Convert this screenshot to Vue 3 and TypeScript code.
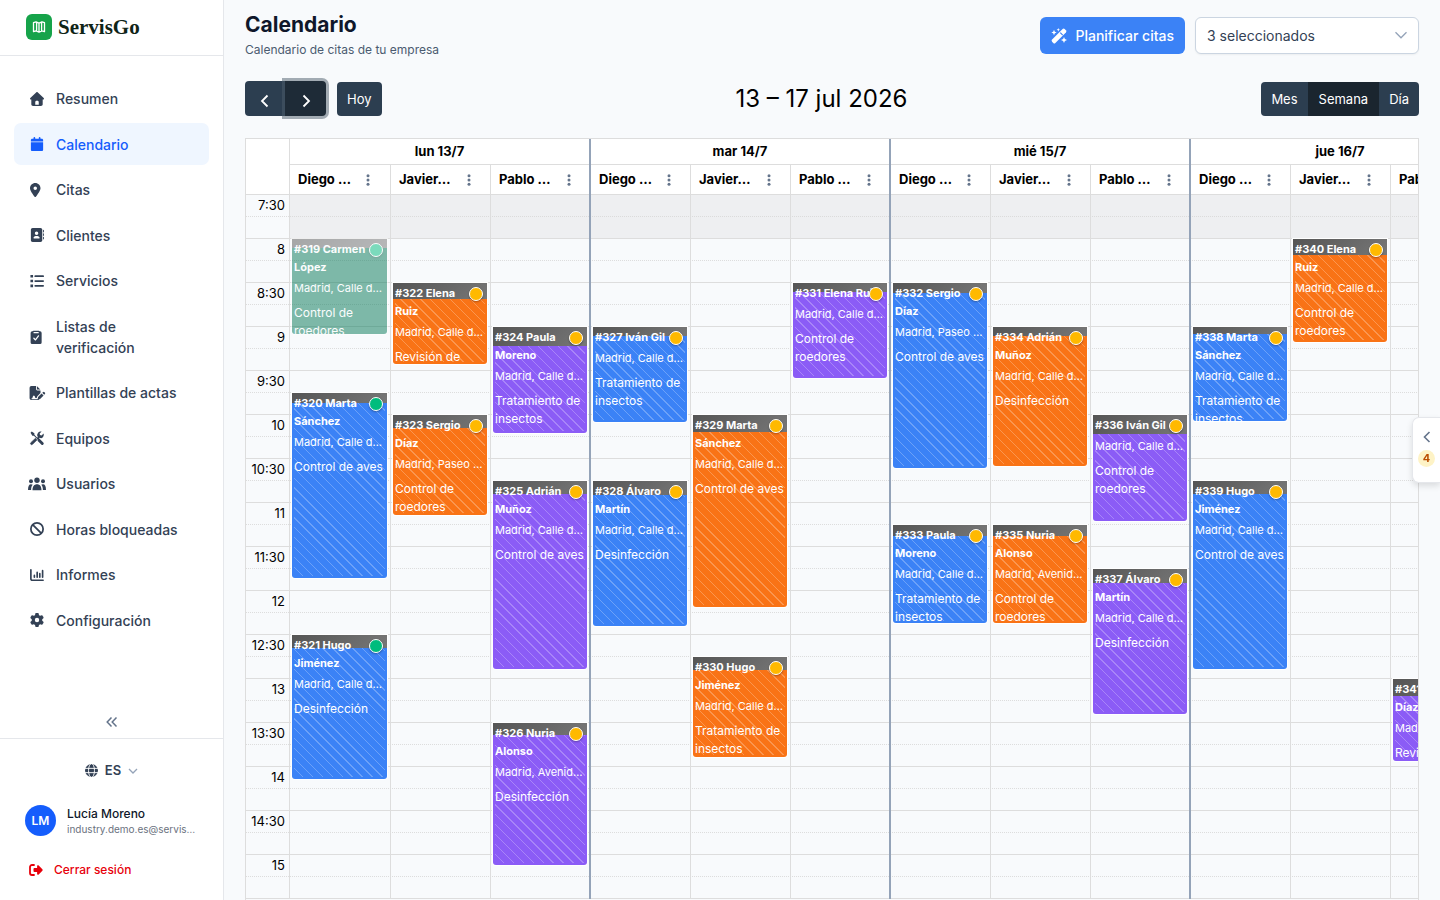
<script setup lang="ts">
import { ref } from 'vue'

interface NavItem { label: string; icon: string; active?: boolean }
interface Appointment {
  id: number
  client: string
  address: string
  service: string
  color: 'blue' | 'orange' | 'violet' | 'green'
  start: number
  height: number
  lead: number
  done?: boolean
  past?: boolean
}
interface Column { resource: string; events: Appointment[] }
interface Day { label: string; columns: Column[] }

const nav: NavItem[] = [
  { label: 'Resumen', icon: 'home' },
  { label: 'Calendario', icon: 'calendar', active: true },
  { label: 'Citas', icon: 'pin' },
  { label: 'Clientes', icon: 'book' },
  { label: 'Servicios', icon: 'list' },
  { label: 'Listas de verificación', icon: 'clipboard' },
  { label: 'Plantillas de actas', icon: 'file' },
  { label: 'Equipos', icon: 'tools' },
  { label: 'Usuarios', icon: 'users' },
  { label: 'Horas bloqueadas', icon: 'ban' },
  { label: 'Informes', icon: 'chart' },
  { label: 'Configuración', icon: 'gear' },
]

const calle = 'Madrid, Calle d…'
const paseo = 'Madrid, Paseo …'
const avenida = 'Madrid, Avenid…'

// start: minutes since 7:30
const days: Day[] = [
  {
    label: 'lun 13/7',
    columns: [
      { resource: 'Diego …', events: [
        { id: 319, client: 'Carmen López', address: calle, service: 'Control de roedores', color: 'green', start: 30, height: 95, lead: 9, done: true, past: true },
        { id: 320, client: 'Marta Sánchez', address: calle, service: 'Control de aves', color: 'blue', start: 135, height: 185, lead: 10, done: true },
        { id: 321, client: 'Hugo Jiménez', address: calle, service: 'Desinfección', color: 'blue', start: 300, height: 144, lead: 13, done: true },
      ] },
      { resource: 'Javier…', events: [
        { id: 322, client: 'Elena\nRuiz', address: calle, service: 'Revisión de', color: 'orange', start: 60, height: 81, lead: 16 },
        { id: 323, client: 'Sergio Díaz', address: paseo, service: 'Control de roedores', color: 'orange', start: 150, height: 100, lead: 13 },
      ] },
      { resource: 'Pablo …', events: [
        { id: 324, client: 'Paula Moreno', address: calle, service: 'Tratamiento de insectos', color: 'violet', start: 90, height: 106, lead: 19 },
        { id: 325, client: 'Adrián Muñoz', address: calle, service: 'Control de aves', color: 'violet', start: 195, height: 188, lead: 13 },
        { id: 326, client: 'Nuria Alonso', address: avenida, service: 'Desinfección', color: 'violet', start: 360, height: 142, lead: 12 },
      ] },
    ],
  },
  {
    label: 'mar 14/7',
    columns: [
      { resource: 'Diego …', events: [
        { id: 327, client: 'Iván Gil', address: calle, service: 'Tratamiento de insectos', color: 'blue', start: 90, height: 95, lead: 9 },
        { id: 328, client: 'Álvaro Martín', address: calle, service: 'Desinfección', color: 'blue', start: 195, height: 145, lead: 14 },
      ] },
      { resource: 'Javier…', events: [
        { id: 329, client: 'Marta Sánchez', address: calle, service: 'Control de aves', color: 'orange', start: 150, height: 192, lead: 17 },
        { id: 330, client: 'Hugo Jiménez', address: calle, service: 'Tratamiento de insectos', color: 'orange', start: 315, height: 100, lead: 13 },
      ] },
      { resource: 'Pablo …', events: [
        { id: 331, client: 'Elena Ruiz', address: calle, service: 'Control de roedores', color: 'violet', start: 60, height: 95, lead: 9 },
      ] },
    ],
  },
  {
    label: 'mié 15/7',
    columns: [
      { resource: 'Diego …', events: [
        { id: 332, client: 'Sergio Díaz', address: paseo, service: 'Control de aves', color: 'blue', start: 60, height: 185, lead: 10 },
        { id: 333, client: 'Paula Moreno', address: calle, service: 'Tratamiento de insectos', color: 'blue', start: 225, height: 98, lead: 11 },
      ] },
      { resource: 'Javier…', events: [
        { id: 334, client: 'Adrián Muñoz', address: calle, service: 'Desinfección', color: 'orange', start: 90, height: 139, lead: 9 },
        { id: 335, client: 'Nuria Alonso', address: avenida, service: 'Control de roedores', color: 'orange', start: 225, height: 98, lead: 11 },
      ] },
      { resource: 'Pablo …', events: [
        { id: 336, client: 'Iván Gil', address: calle, service: 'Control de roedores', color: 'violet', start: 150, height: 106, lead: 19 },
        { id: 337, client: 'Álvaro Martín', address: calle, service: 'Desinfección', color: 'violet', start: 255, height: 145, lead: 14 },
      ] },
    ],
  },
  {
    label: 'jue 16/7',
    columns: [
      { resource: 'Diego …', events: [
        { id: 338, client: 'Marta Sánchez', address: calle, service: 'Tratamiento de insectos', color: 'blue', start: 90, height: 94, lead: 7 },
        { id: 339, client: 'Hugo Jiménez', address: calle, service: 'Control de aves', color: 'blue', start: 195, height: 188, lead: 13 },
      ] },
      { resource: 'Javier…', events: [
        { id: 340, client: 'Elena\nRuiz', address: calle, service: 'Control de roedores', color: 'orange', start: 30, height: 103, lead: 16 },
      ] },
      { resource: 'Pablo …', events: [
        { id: 341, client: 'Sergio\nDíaz', address: calle, service: 'Revisión de', color: 'violet', start: 330, height: 82, lead: 17 },
      ] },
    ],
  },
]

const slots = ['7:30', '8', '8:30', '9', '9:30', '10', '10:30', '11', '11:30', '12', '12:30', '13', '13:30', '14', '14:30', '15']
const views = ['Mes', 'Semana', 'Día']
const view = ref('Semana')
const SLOT_PX = 44

const place = (e: Appointment) => ({
  top: `${Math.round((e.start / 30) * SLOT_PX)}px`,
  height: `${e.height}px`,
  '--lead': `${e.lead}px`,
})
</script>

<template>
  <div class="app">
    <aside class="sidebar">
      <div class="brand">
        <svg class="logo" viewBox="0 0 26 26" aria-hidden="true">
          <rect width="26" height="26" rx="6" fill="#16a34a" />
          <path d="M7.5 8.6 10 7.8l3 1.3 3-1.3 2.5.9v9l-2.5-.8-3 1.3-3-1.3-2.5.8zM10.6 8v9.2M13 9.2V18M15.6 8v9.2" fill="none" stroke="#fff" stroke-width="1.3" stroke-linejoin="round" />
        </svg>
        <span class="brand-name">ServisGo</span>
      </div>

      <nav class="nav">
        <a v-for="n in nav" :key="n.label" href="#" class="nav-item" :class="{ active: n.active }">
          <svg v-if="n.icon === 'home'" class="nav-icon" viewBox="0 0 512 512"><path fill-rule="evenodd" d="M277.800 8.600c-12.300-11.400-31.300-11.400-43.500 0l-224 208c-9.600 9-12.800 22.900-8 35.100S18.800 272 32 272h16v176c0 35.300 28.700 64 64 64h288c35.300 0 64-28.700 64-64V272h16c13.200 0 25-8.100 29.800-20.300s1.600-26.200-8-35.100zM240 320h32c26.500 0 48 21.500 48 48v96H192v-96c0-26.500 21.500-48 48-48z" /></svg>
          <svg v-else-if="n.icon === 'calendar'" class="nav-icon" viewBox="-32 0 512 512"><path d="M96 32V64H48C21.500 64 0 85.500 0 112v48H448V112c0-26.500-21.500-48-48-48H352V32c0-17.700-14.300-32-32-32s-32 14.300-32 32V64H160V32c0-17.700-14.300-32-32-32S96 14.300 96 32zM448 192H0V464c0 26.500 21.500 48 48 48H400c26.500 0 48-21.500 48-48V192z" /></svg>
          <svg v-else-if="n.icon === 'pin'" class="nav-icon" viewBox="0 0 512 512"><path d="M215.700 499.200C267 435 384 279.400 384 192C384 86 298 0 192 0S0 86 0 192c0 87.400 117 243 168.300 307.200c12.300 15.300 35.100 15.300 47.400 0zM192 128a64 64 0 1 1 0 128 64 64 0 1 1 0-128z" fill-rule="evenodd" /></svg>
          <svg v-else-if="n.icon === 'book'" class="nav-icon" viewBox="0 0 512 512"><path fill-rule="evenodd" d="M96 0C60.700 0 32 28.700 32 64V448c0 35.300 28.700 64 64 64H384c35.300 0 64-28.700 64-64V64c0-35.300-28.700-64-64-64H96zM208 288h64c44.200 0 80 35.800 80 80c0 8.800-7.200 16-16 16H144c-8.800 0-16-7.200-16-16c0-44.200 35.800-80 80-80zm-32-96a64 64 0 1 1 128 0 64 64 0 1 1 -128 0zM512 80c0-8.800-7.200-16-16-16s-16 7.200-16 16v64c0 8.800 7.200 16 16 16s16-7.200 16-16V80zM496 192c-8.800 0-16 7.200-16 16v64c0 8.800 7.200 16 16 16s16-7.200 16-16V208c0-8.800-7.200-16-16-16zm16 144c0-8.800-7.200-16-16-16s-16 7.200-16 16v64c0 8.800 7.200 16 16 16s16-7.200 16-16V336z" /></svg>
          <svg v-else-if="n.icon === 'list'" class="nav-icon" viewBox="0 0 16 16"><path d="M.5 1h3v3h-3zM.5 6.500h3v3h-3zM.5 12h3v3h-3z" /><path d="M6 2.500h9M6 8h9M6 13.500h9" stroke="currentColor" stroke-width="2" stroke-linecap="round" /></svg>
          <svg v-else-if="n.icon === 'clipboard'" class="nav-icon" viewBox="-1 0 16 16"><path d="M3 .8h6a1 1 0 0 1 1 .7h.5A1.800 1.800 0 0 1 12.300 3.300v10.900A1.800 1.800 0 0 1 10.500 16h-9A1.800 1.800 0 0 1-.3 14.200V3.300A1.800 1.800 0 0 1 1.500 1.500H2a1 1 0 0 1 1-.7z" /><path d="M3.600 3h4.800M3.400 9.400l1.900 2 3.400-4.700" fill="none" stroke="#fff" stroke-width="1.400" stroke-linecap="round" stroke-linejoin="round" /></svg>
          <svg v-else-if="n.icon === 'file'" class="nav-icon wide" viewBox="0 0 18 16"><path d="M2.500 0H8v3.800A1.200 1.200 0 0 0 9.200 5H13v3l-3.600 3.600-.8 2.200H7.200L6.300 11.500a1 1 0 0 0-1.800 0L3.600 14H2.800v1.200h8.700A2 2 0 0 1 11 16H2.500a2 2 0 0 1-2-2V2a2 2 0 0 1 2-2zM9 .2 12.800 4H9z" /><path d="M10.200 12.600l4-4 2.300 2.300-4 4-2.900.8zM15 7.800l.8-.8a1.200 1.200 0 0 1 1.700 0l.5.500a1.200 1.200 0 0 1 0 1.700l-.8.8z" /></svg>
          <svg v-else-if="n.icon === 'tools'" class="nav-icon wide" viewBox="0 0 16 16"><path d="M.6 1.900 2 .5l3 2.200v1.700l3 3 1-.2a4.300 4.300 0 0 1 .2-5.300A4.200 4.200 0 0 1 13.300.6L11 2.900l.4 1.800 1.800.4 2.300-2.300c.7 2-.1 4.200-1.900 5.100l-.9.3-1.800-.5-.6.800.6.300 4.300 4.300a1.600 1.600 0 0 1-2.300 2.300L8.800 11.300 8.500 9.500 4.400 5.400H2.700z" /><path d="M6.300 8.300 1 13.300a1.300 1.300 0 1 0 1.900 1.900l5-5z" stroke="currentColor" stroke-width=".8" /></svg>
          <svg v-else-if="n.icon === 'users'" class="nav-icon users" viewBox="0 0 18 14"><circle cx="9" cy="3.300" r="2.700" /><circle cx="3" cy="4.300" r="2" /><circle cx="15" cy="4.300" r="2" /><path d="M4.500 13.300c0-4 1.800-6 4.500-6s4.500 2 4.500 6zM0 13c0-4 1-5.800 3-5.800.8 0 1.300.2 1.700.5C3.500 9 3.100 10.800 3.100 13zM18 13c0-4-1-5.800-3-5.800-.8 0-1.300.2-1.700.5 1.200 1.300 1.600 3.100 1.600 5.300z" /></svg>
          <svg v-else-if="n.icon === 'ban'" class="nav-icon" viewBox="0 0 16 16"><g fill="none" stroke="currentColor" stroke-width="2"><circle cx="8" cy="8" r="7" /><path d="M3 3l10 10" /></g></svg>
          <svg v-else-if="n.icon === 'chart'" class="nav-icon" viewBox="0 0 16 16"><path d="M1 2v10.500A1.500 1.500 0 0 0 2.500 14H15M5 10.600V8.500M8.200 10.600V5M11.200 10.600V6.500M14.400 10.600V3" fill="none" stroke="currentColor" stroke-width="1.900" stroke-linecap="round" /></svg>
          <svg v-else class="nav-icon" viewBox="0 0 512 512"><path d="M495.900 166.600c3.200 8.700 .5 18.400-6.400 24.600l-43.300 39.400c1.100 8.300 1.700 16.800 1.700 25.400s-.6 17.100-1.700 25.400l43.300 39.400c6.900 6.200 9.600 15.900 6.400 24.600c-4.400 11.900-9.700 23.300-15.800 34.300l-4.700 8.100c-6.600 11-14 21.400-22.100 31.200c-5.900 7.200-15.700 9.600-24.500 6.800l-55.700-17.700c-13.400 10.300-28.200 18.900-44 25.400l-12.500 57.100c-2 9.100-9 16.300-18.200 17.800c-13.800 2.300-28 3.500-42.500 3.500s-28.700-1.200-42.500-3.500c-9.200-1.500-16.200-8.700-18.200-17.800l-12.500-57.100c-15.800-6.500-30.600-15.100-44-25.400L83.100 425.900c-8.800 2.800-18.600 .3-24.500-6.800c-8.100-9.800-15.500-20.200-22.100-31.200l-4.700-8.100c-6.100-11-11.400-22.400-15.800-34.300c-3.200-8.700-.5-18.400 6.400-24.600l43.300-39.400C64.600 273.100 64 264.600 64 256s.6-17.100 1.700-25.400L22.400 191.200c-6.900-6.200-9.600-15.900-6.400-24.600c4.400-11.900 9.700-23.300 15.800-34.300l4.700-8.100c6.600-11 14-21.400 22.100-31.200c5.900-7.200 15.700-9.600 24.500-6.800l55.700 17.700c13.400-10.300 28.200-18.900 44-25.400l12.500-57.100c2-9.100 9-16.300 18.200-17.800C227.300 1.200 241.500 0 256 0s28.700 1.200 42.500 3.500c9.200 1.500 16.200 8.700 18.200 17.800l12.500 57.100c15.800 6.500 30.600 15.100 44 25.400l55.700-17.700c8.800-2.800 18.600-.3 24.500 6.800c8.100 9.800 15.500 20.200 22.100 31.200l4.700 8.100c6.100 11 11.400 22.400 15.800 34.300zM256 336a80 80 0 1 0 0-160 80 80 0 1 0 0 160z" fill-rule="evenodd" /></svg>
          <span>{{ n.label }}</span>
        </a>
      </nav>

      <button class="collapse" type="button" aria-label="Contraer menú">
        <svg viewBox="0 0 12 12"><path d="M5.500 1.500 1.200 6l4.300 4.500M10.500 1.500 6.200 6l4.300 4.500" /></svg>
      </button>

      <div class="account">
        <button class="lang" type="button">
          <svg class="globe" viewBox="0 0 14 14"><circle cx="7" cy="7" r="7" fill="currentColor" /><g fill="none" stroke="#fff" stroke-width="1"><ellipse cx="7" cy="7" rx="3.200" ry="7.400" /><path d="M0 4.700h14M0 9.300h14" /></g></svg>
          ES
          <svg class="caret" viewBox="0 0 10 10"><path d="M1 3l4 4 4-4" /></svg>
        </button>
        <div class="user">
          <span class="avatar">LM</span>
          <div class="user-text">
            <span class="user-name">Lucía Moreno</span>
            <span class="user-mail">industry.demo.es@servis…</span>
          </div>
        </div>
        <button class="logout" type="button">
          <svg viewBox="0 0 14 12"><path d="M5 1H3a2 2 0 0 0-2 2v6a2 2 0 0 0 2 2h2" fill="none" stroke="currentColor" stroke-width="1.800" stroke-linecap="round" /><path d="M8.300 1.600c.4-.4 1-.4 1.400 0l3.700 3.700c.4.400.4 1 0 1.400L9.700 10.400c-.6.600-1.600.2-1.600-.7V7.900H5.400a.9.900 0 0 1-.9-.9V5c0-.5.4-.9.900-.9h2.700V2.300c0-.3 0-.5.200-.7z" fill="currentColor" /></svg>
          Cerrar sesión
        </button>
      </div>
    </aside>

    <main class="main">
      <header class="page-head">
        <div class="heading">
          <h1>Calendario</h1>
          <p>Calendario de citas de tu empresa</p>
        </div>
        <div class="head-actions">
          <button class="plan" type="button">
            <svg viewBox="0 0 16 16" fill="#fff"><path d="M11.600 1.100a1.500 1.500 0 0 1 2.100 0l1.200 1.200a1.500 1.500 0 0 1 0 2.100L4.400 14.900a1.500 1.500 0 0 1-2.100 0L1.100 13.700a1.500 1.500 0 0 1 0-2.100z" /><path d="M9.300 4.700l2.400 2.400" stroke="#3b82f6" stroke-width="1.200" /><path d="M3 1.800l.8 1.900 1.900.8-1.900.8L3 7.200l-.8-1.900-1.900-.8 1.900-.8zM13 9l.9 2.100 2.100.9-2.100.9L13 15l-.9-2.100L10 12l2.100-.9zM7.300 0l.5 1.200 1.200.5-1.200.5-.5 1.200-.5-1.200-1.200-.5 1.200-.5z" /></svg>
            Planificar citas
          </button>
          <div class="select-wrap">
            <select aria-label="Técnicos">
              <option>3 seleccionados</option>
            </select>
            <svg class="select-caret" viewBox="0 0 14 14"><path d="M1.500 4.200 7 9.800l5.500-5.600" /></svg>
          </div>
        </div>
      </header>

      <div class="toolbar">
        <div class="tools">
          <div class="group">
            <button class="fc step" type="button" aria-label="Anterior"><svg viewBox="0 0 14 14"><path d="M9.500 1.500 4 7l5.500 5.500" /></svg></button>
            <button class="fc step current" type="button" aria-label="Siguiente"><svg viewBox="0 0 14 14"><path d="M4.500 1.500 10 7l-5.500 5.500" /></svg></button>
          </div>
          <button class="fc today" type="button">Hoy</button>
        </div>
        <h2>13 – 17 jul 2026</h2>
        <div class="group views">
          <button v-for="v in views" :key="v" class="fc" :class="{ selected: v === view }" type="button" @click="view = v">{{ v }}</button>
        </div>
      </div>

      <section class="calendar">
        <div class="cal-head">
          <div class="axis-head"></div>
          <div v-for="d in days" :key="d.label" class="day-head">
            <div class="day-label">{{ d.label }}</div>
            <div class="resources">
              <div v-for="c in d.columns" :key="c.resource" class="resource">
                <span>{{ c.resource }}</span>
                <button type="button" class="more" aria-label="Opciones">
                  <svg viewBox="0 0 4 12"><circle cx="2" cy="1.700" r="1.500" /><circle cx="2" cy="6" r="1.500" /><circle cx="2" cy="10.300" r="1.500" /></svg>
                </button>
              </div>
            </div>
          </div>
        </div>

        <div class="cal-body">
          <div class="slots">
            <div v-for="s in slots" :key="s" class="slot"><span>{{ s }}</span></div>
          </div>
          <div class="lanes">
            <div class="axis"></div>
            <div v-for="d in days" :key="d.label" class="day">
              <div v-for="c in d.columns" :key="c.resource" class="lane">
                <div class="closed"></div>
                <div class="lane-events">
                  <article v-for="e in c.events" :key="e.id" class="event" :class="[e.color, { past: e.past }]" :style="place(e)">
                    <span class="status" :class="{ done: e.done }"></span>
                    <div class="client">#{{ e.id }} {{ e.client }}</div>
                    <div class="address">{{ e.address }}</div>
                    <div class="service">{{ e.service }}</div>
                  </article>
                </div>
              </div>
            </div>
          </div>
        </div>
      </section>
    </main>

    <button class="drawer" type="button" aria-label="Citas pendientes">
      <svg viewBox="0 0 12 12"><path d="M8.500 1 3.500 6l5 5" /></svg>
      <span>4</span>
    </button>
  </div>
</template>

<style>
body { background: #f8fafc; }
</style>

<style scoped>
* { box-sizing: border-box; }
.app {
  display: flex;
  height: 100vh;
  overflow: hidden;
  background: #f8fafc;
  font-family: Inter, "Noto Sans", sans-serif;
  font-size: 13px;
  line-height: 21px;
  color: #000;
}
button, select { font: inherit; border: 0; padding: 0; background: none; cursor: pointer; }
h1, h2, p { margin: 0; }

.sidebar {
  display: flex;
  flex-direction: column;
  flex: none;
  width: 224px;
  background: #fff;
  border-right: 1px solid #e5e7eb;
}
.brand {
  display: flex;
  align-items: center;
  gap: 6px;
  height: 56px;
  padding: 0 26px 2px;
  border-bottom: 1px solid #e5e7eb;
}
.logo { width: 26px; height: 26px; }
.brand-name { font: bold 21px/26px "Liberation Serif", serif; color: #0f2417; }
.nav {
  display: flex;
  flex-direction: column;
  gap: 0.25em;
  padding: 21px 14px;
  font-size: 14px;
}
.nav-item {
  display: flex;
  align-items: center;
  gap: 11px;
  padding: 11px 14px 10px;
  border-radius: 7px;
  color: #334155;
  font-weight: 500;
  text-decoration: none;
}
.nav-item.active { background: #eff6ff; color: #155dfc; }
.nav-item span { max-width: 126px; }
.nav-icon { flex: none; width: 14px; height: 14px; margin: 0 1px 0 2px; fill: currentColor; overflow: visible; }
.nav-icon.wide { width: 16px; margin: 0 0 0 1px; }
.nav-icon.users { width: 18px; margin: 0 -1px 0 0; }
.collapse {
  margin-top: auto;
  height: 32px;
  color: #64748b;
  display: flex;
  align-items: center;
  justify-content: center;
}
.collapse svg { width: 12px; height: 12px; fill: none; stroke: currentColor; stroke-width: 1.5; }
.account {
  border-top: 1px solid #e5e7eb;
  display: flex;
  flex-direction: column;
  padding: 18px 25px 20px;
}
.lang {
  display: flex;
  align-items: center;
  align-self: center;
  gap: 7px;
  height: 27px;
  color: #334155;
  font-weight: 600;
}
.globe { width: 13px; height: 13px; }
.caret { width: 10px; height: 10px; fill: none; stroke: #94a3b8; stroke-width: 1.3; }
.user { display: flex; align-items: center; gap: 11px; margin-top: 21px; }
.avatar {
  flex: none;
  display: flex;
  align-items: center;
  justify-content: center;
  width: 31px;
  height: 31px;
  border-radius: 50%;
  background: #155dfc;
  color: #fff;
  font-size: 12px;
  font-weight: 600;
}
.user-text { display: flex; flex-direction: column; min-width: 0; }
.user-name { font-size: 12px; line-height: 16px; font-weight: 500; color: #0f172a; }
.user-mail { font-size: 10px; line-height: 14px; color: #6b7280; white-space: nowrap; }
.logout {
  display: flex;
  align-items: center;
  gap: 11px;
  margin: 23px 0 0 4px;
  color: #e7000b;
  font-size: 12px;
  font-weight: 500;
}
.logout svg { width: 14px; height: 12px; }

.main {
  flex: 1;
  min-width: 0;
  display: flex;
  flex-direction: column;
  padding: 11px 21px 0;
}
.page-head { display: flex; justify-content: space-between; }
h1 { font-size: 21px; line-height: 28px; font-weight: 700; color: #0f172a; }
.heading p { margin-top: 1px; font-size: 12px; line-height: 20px; color: #4b5b70; }
.head-actions { display: flex; gap: 10px; margin-top: 6px; font-size: 14px; }
.plan {
  display: flex;
  align-items: center;
  gap: 8px;
  height: 37px;
  padding: 0 11px;
  border-radius: 6px;
  background: #3b82f6;
  color: #fff;
  font-weight: 500;
}
.plan svg { width: 16px; height: 16px; }
.select-wrap { position: relative; width: 224px; height: 37px; }
.select-wrap select {
  appearance: none;
  width: 100%;
  height: 100%;
  padding: 0 32px 0 11px;
  border: 1px solid #cbd5e1;
  border-radius: 6px;
  background: #fff;
  color: #334155;
  box-shadow: 0 1px 2px rgba(18, 18, 23, .05);
}
.select-caret {
  position: absolute;
  right: 11px;
  top: 11px;
  width: 14px;
  height: 14px;
  fill: none;
  stroke: #94a3b8;
  stroke-width: 1.3;
  pointer-events: none;
}

.toolbar {
  display: flex;
  justify-content: space-between;
  align-items: flex-end;
  height: 36px;
  margin-top: 20px;
}
.tools { display: flex; align-items: flex-end; gap: 11px; }
.toolbar h2 { font-size: 24px; line-height: 34px; font-weight: 400; }
.group { display: flex; }
.fc {
  height: 34px;
  padding: 0 10px;
  background: #2c3e50;
  color: #fff;
}
.today { border-radius: 4px; }
.group .fc:first-child { border-radius: 4px 0 0 4px; }
.group .fc:last-child { border-radius: 0 4px 4px 0; }
.step { width: 40px; height: 35px; display: flex; align-items: center; justify-content: center; padding: 4px 0 0; }
.step svg { width: 14px; height: 14px; fill: none; stroke: #fff; stroke-width: 1.8; }
.step.current { width: 41px; background: #1e2b37; box-shadow: 0 0 0 3px rgba(76, 91, 106, .5); }
.fc.selected { padding: 0 11px; background: #1a252f; }

.calendar {
  flex: 1;
  min-height: 0;
  margin-top: 22px;
  border: 1px solid #ddd;
  border-bottom: 0;
  overflow: hidden;
}
.cal-head { display: flex; background: #fff; width: max-content; min-width: 100%; }
.axis-head, .axis { flex: none; width: 44px; border-right: 1px solid #ddd; }
.axis-head { border-bottom: 1px solid #ddd; }
.day-head { flex: 1 0 auto; border-right: 2px solid #94a3b8; font-weight: 700; }
.day-label { height: 26px; line-height: 24px; text-align: center; border-bottom: 1px solid #ddd; }
.resources { display: flex; border-bottom: 1px solid #ddd; }
.resource {
  display: flex;
  align-items: center;
  height: 29px;
  padding-left: 8px;
}
.resource, .lane { flex: 1 0 auto; width: 100px; border-right: 1px solid #ddd; }
.resource:last-child, .lane:last-child { width: 98px; border-right: 0; }
.axis-head + .day-head .resource:first-child, .axis + .day .lane:first-child { width: 101px; }
.resource span { width: 60px; white-space: nowrap; }
.more { display: flex; margin-left: 8px; }
.more svg { width: 4px; height: 12px; fill: #64748b; }

.cal-body { display: grid; width: max-content; min-width: 100%; }
.slots, .lanes { grid-area: 1 / 1; }
.slot { height: 44px; border-bottom: 1px solid #ddd; }
.slot::after { content: ""; display: block; border-top: 1px dotted #ddd; }
.slot span { display: block; width: 39px; height: 21px; text-align: right; }
.lanes { display: flex; }
.day { display: flex; flex: 1 0 auto; border-right: 2px solid #94a3b8; }
.closed { height: 43px; background: rgba(215, 215, 215, .3); }
.lane-events { position: relative; margin: -43px 3px 0 2px; }
.lane:last-child .lane-events { margin-right: 2px; }

.event {
  position: absolute;
  z-index: 0;
  left: 0;
  right: 0;
  overflow: hidden;
  padding: 1px 2px;
  border-radius: 0 0 3px 3px;
  box-shadow: 0 0 0 1px #fff;
  color: #fff;
  font-size: 11px;
  line-height: 18px;
}
.event::before {
  content: "";
  position: absolute;
  z-index: -1;
  inset: var(--lead) 2px 2px;
  background: repeating-linear-gradient(45deg, transparent, transparent 6px, rgba(255, 255, 255, .25) 6px, rgba(255, 255, 255, .25) 7px);
}
.event::after {
  content: "";
  position: absolute;
  z-index: -1;
  inset: 0 0 auto;
  height: var(--lead);
  background: linear-gradient(135deg, #555, #777);
}
.blue { background: #3b82f6; }
.orange { background: #f97316; }
.violet { background: #8b5cf6; }
.green { background: #047857; }
.past { opacity: .5; }
.past::before { display: none; }
.client { font-weight: 700; white-space: pre-line; }
.address { margin-top: 3px; white-space: nowrap; }
.service { margin-top: 7px; font-size: 12px; }
.status {
  position: absolute;
  z-index: 1;
  top: 4px;
  right: 4px;
  width: 14px;
  height: 14px;
  border: 1px solid #fff;
  border-radius: 50%;
  background: #ffb900;
  box-shadow: 0 1px 2px rgba(0, 0, 0, .3);
}
.status.done { background: #00bc7d; }

.drawer {
  position: fixed;
  right: 0;
  top: 50%;
  transform: translateY(-50%);
  display: flex;
  flex-direction: column;
  align-items: center;
  gap: 7px;
  width: 28px;
  height: 66px;
  padding: 13px 0 0;
  border: 1px solid #e5e7eb;
  border-right: 0;
  border-radius: 7px 0 0 7px;
  background: #fff;
  box-shadow: 0 3px 6px rgba(0, 0, 0, .12);
}
.drawer svg { width: 12px; height: 12px; fill: none; stroke: #64748b; stroke-width: 1.6; }
.drawer span {
  width: 17px;
  height: 17px;
  border-radius: 50%;
  background: #fef3c6;
  color: #bb4d00;
  font-size: 11px;
  line-height: 17px;
  font-weight: 700;
}
</style>
